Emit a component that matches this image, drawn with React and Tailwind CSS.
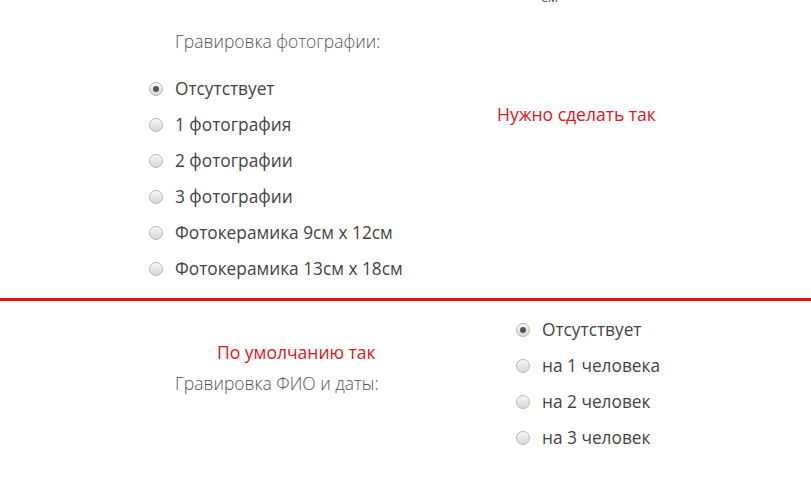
import React from "react";

function Radio({ checked }) {
  return (
    <span className="relative inline-flex h-[14px] w-[14px] shrink-0 items-center justify-center rounded-full border border-[#b5b5b5] bg-gradient-to-b from-[#f4f4f4] to-[#d9d9d9] shadow-[inset_0_1px_1px_rgba(255,255,255,0.8)]">
      {checked && <span className="h-[6px] w-[6px] rounded-full bg-[#555]" />}
    </span>
  );
}

function Option({ label, checked }) {
  return (
    <div className="flex h-[36px] items-center gap-[12px] whitespace-nowrap">
      <Radio checked={checked} />
      <span className="text-[17.3px] leading-[20px] text-[#444]">{label}</span>
    </div>
  );
}

export default function App() {
  const top = [
    "Отсутствует",
    "1 фотография",
    "2 фотографии",
    "3 фотографии",
    "Фотокерамика 9см x 12см",
    "Фотокерамика 13см x 18см",
  ];
  const bottom = ["Отсутствует", "на 1 человека", "на 2 человек", "на 3 человек"];
  return (
    <div
      className="h-[504px] w-[811px] overflow-hidden bg-white"
      style={{ fontFamily: '"Open Sans", "Noto Sans", sans-serif' }}
    >
      <div className="-mt-[11px] h-[16px] pl-[541px] text-[14px] leading-[16px] text-[#555]">см</div>
      <div className="flex">
        <div className="w-[497px] shrink-0 pl-[149px]">
          <div className="mt-[26px] whitespace-nowrap pl-[26px] text-[17.5px] font-light leading-[20px] text-[#555]">
            Гравировка фотографии:
          </div>
          <div className="mt-[20px]">
            {top.map((t, i) => (
              <Option key={t} label={t} checked={i === 0} />
            ))}
          </div>
        </div>
        <div className="whitespace-nowrap pt-[99px] text-[17.5px] leading-[20px] text-[#e0141b]">Нужно сделать так</div>
      </div>
      <div className="mt-[11px] h-[3px] w-full bg-[#e41212]" />
      <div className="flex">
        <div className="w-[516px] shrink-0 pl-[175px]">
          <div className="mt-[41px] whitespace-nowrap pl-[42px] text-[17.5px] leading-[20px] text-[#e0141b]">По умолчанию так</div>
          <div className="mt-[11px] whitespace-nowrap text-[17.5px] font-light leading-[20px] text-[#555]">Гравировка ФИО и даты:</div>
        </div>
        <div className="mt-[11px]">
          {bottom.map((t, i) => (
            <Option key={t} label={t} checked={i === 0} />
          ))}
        </div>
      </div>
    </div>
  );
}
